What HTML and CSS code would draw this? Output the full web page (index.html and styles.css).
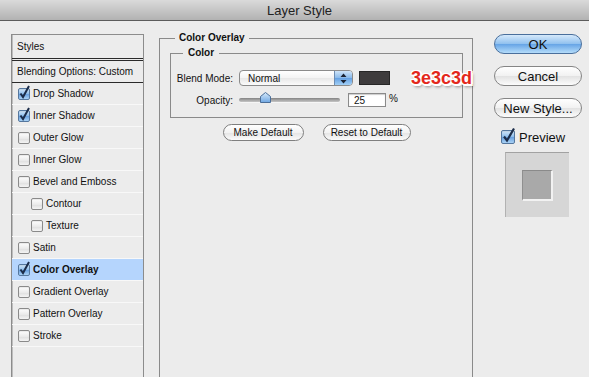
FILE: index.html
```html
<!DOCTYPE html>
<html>
<head>
    <title>Layer Style</title>
    <link rel="stylesheet" href="styles.css">
</head>
<body>
    <div class="titlebar">Layer Style</div>
    <div class="content">
        <div class="styles-list">
            <div class="list-head">Styles</div>
            <div class="list-blend">Blending Options: Custom</div>
            <div class="item"><span class="check on"><svg width="13" height="14" viewBox="0 0 13 14"><path d="M2.5 8.5 L5 12 L11 1" fill="none" stroke="#1c2d4a" stroke-width="2"/></svg></span>Drop Shadow</div>
            <div class="item"><span class="check on"><svg width="13" height="14" viewBox="0 0 13 14"><path d="M2.5 8.5 L5 12 L11 1" fill="none" stroke="#1c2d4a" stroke-width="2"/></svg></span>Inner Shadow</div>
            <div class="item"><span class="check"></span>Outer Glow</div>
            <div class="item"><span class="check"></span>Inner Glow</div>
            <div class="item"><span class="check"></span>Bevel and Emboss</div>
            <div class="item sub"><span class="check"></span>Contour</div>
            <div class="item sub"><span class="check"></span>Texture</div>
            <div class="item"><span class="check"></span>Satin</div>
            <div class="item selected"><span class="check on"><svg width="13" height="14" viewBox="0 0 13 14"><path d="M2.5 8.5 L5 12 L11 1" fill="none" stroke="#1c2d4a" stroke-width="2"/></svg></span>Color Overlay</div>
            <div class="item"><span class="check"></span>Gradient Overlay</div>
            <div class="item"><span class="check"></span>Pattern Overlay</div>
            <div class="item"><span class="check"></span>Stroke</div>
        </div>

        <fieldset class="group">
            <legend>Color Overlay</legend>
            <fieldset class="subgroup">
                <legend>Color</legend>
                <div class="form-grid">
                    <label>Blend Mode:</label>
                    <div class="row">
                        <div class="select">
                            <span>Normal</span>
                            <span class="stepper"><svg width="7" height="11" viewBox="0 0 7 11"><path d="M3.5 0.5 L6.5 4 L0.5 4 Z M0.5 7 L6.5 7 L3.5 10.5 Z" fill="#1b2333"/></svg></span>
                        </div>
                        <span class="swatch"></span>
                        <span class="hex">3e3c3d</span>
                    </div>
                    <label>Opacity:</label>
                    <div class="row">
                        <div class="slider">
                            <span class="thumb"><svg width="11" height="11" viewBox="0 0 11 11"><defs><linearGradient id="tg" x1="0" y1="0" x2="0" y2="1"><stop offset="0" stop-color="#d8ebfb"/><stop offset="1" stop-color="#6ea6e2"/></linearGradient></defs><path d="M5.5 0.5 L10.5 4.5 L10.5 10.5 L0.5 10.5 L0.5 4.5 Z" fill="url(#tg)" stroke="#4c6f99"/></svg></span>
                        </div>
                        <span class="field">25</span>
                        <span class="unit">%</span>
                    </div>
                </div>
            </fieldset>
            <div class="defaults">
                <button class="pill make">Make Default</button>
                <button class="pill reset">Reset to Default</button>
            </div>
        </fieldset>

        <div class="side">
            <button class="side-btn ok">OK</button>
            <button class="side-btn">Cancel</button>
            <button class="side-btn">New Style...</button>
            <div class="preview-toggle"><span class="check on big"><svg width="15" height="16" viewBox="0 0 15 16"><path d="M3 9.5 L6 13.5 L13 1.5" fill="none" stroke="#1c2d4a" stroke-width="2.2"/></svg></span>Preview</div>
            <div class="preview-box"><div class="preview-swatch"></div></div>
        </div>
    </div>
</body>
</html>
```

FILE: styles.css
```css
body {
    margin: 0;
    height: 377px;
    overflow: hidden;
    background: #ececec;
    font-family: "Liberation Sans", Arial, sans-serif;
    font-size: 10px;
    color: #111;
}

.titlebar {
    height: 20px;
    padding-left: 10px;
    border-bottom: 1px solid #5c5c5c;
    background: linear-gradient(#dadada, #b2b2b2);
    text-align: center;
    font-size: 13px;
    line-height: 21px;
    color: #222;
}

.content {
    display: flex;
    align-items: flex-start;
    padding-top: 11px;
}

/* left style list */
.styles-list {
    flex: none;
    margin: 2px 0 0 11px;
    width: 131px;
    height: 360px;
    border: 1px solid #8c8c8c;
    box-shadow: inset 1px 0 0 #bdbdbd;
    background: #ececec;
}

.list-head {
    height: 23px;
    line-height: 23px;
    padding-left: 5px;
    border-bottom: 3px double #2a2a2a;
}

.list-blend {
    height: 21px;
    line-height: 21px;
    padding-left: 5px;
    border-bottom: 1px solid #2a2a2a;
}

.item {
    height: 21px;
    display: flex;
    align-items: center;
    padding-left: 6px;
    border-bottom: 1px solid #f8f8f8;
}

.item.sub {
    padding-left: 19px;
}

.item.selected {
    background: #b5d5fd;
    font-weight: bold;
}

.check {
    position: relative;
    flex: none;
    width: 10px;
    height: 10px;
    margin-right: 3px;
    border: 1px solid #8a8a8a;
    border-radius: 2px;
    background: linear-gradient(#ffffff, #eaeaea 55%, #dedede 56%, #f4f4f4);
    box-shadow: inset 0 1px 1px rgba(0, 0, 0, 0.08);
}

.check.on {
    border-color: #55779e;
    background: linear-gradient(#d3e7f9, #8bbcec 50%, #679fe0 51%, #a9d2f5);
}

.check svg {
    position: absolute;
    left: -1px;
    top: -4px;
}

.check.big {
    width: 12px;
    height: 12px;
}

/* middle settings */
.group {
    flex: none;
    box-sizing: border-box;
    width: 314px;
    min-width: 0;
    height: 350px;
    margin: 0 0 0 15px;
    padding: 3px 9px 0 10px;
    border: 1px solid #8a8a8a;
}

.group > legend {
    margin-left: 5px;
    padding: 0 4px;
    font-weight: bold;
    line-height: 12px;
}

.subgroup {
    min-width: 0;
    margin: 0;
    padding: 0 0 10px 0;
    border: 1px solid #8a8a8a;
}

.subgroup > legend {
    margin-left: 12px;
    padding: 0 5px;
    font-weight: bold;
    line-height: 12px;
}

.form-grid {
    display: grid;
    grid-template-columns: 62px 0;
    grid-template-rows: 16px 14px;
    column-gap: 6px;
    row-gap: 7px;
    padding-top: 11px;
    align-items: center;
}

.form-grid label {
    text-align: right;
}

.row {
    display: flex;
    align-items: center;
    height: 100%;
    white-space: nowrap;
}

.select {
    flex: none;
    box-sizing: border-box;
    width: 114px;
    height: 16px;
    display: flex;
    align-items: center;
    justify-content: space-between;
    padding-left: 8px;
    overflow: hidden;
    border: 1px solid #8b8b8b;
    border-radius: 4px;
    background: linear-gradient(#ffffff, #f3f3f3 50%, #e7e7e7 51%, #fbfbfb);
}

.stepper {
    width: 17px;
    align-self: stretch;
    display: flex;
    align-items: center;
    justify-content: center;
    border-left: 1px solid #6d8cb1;
    background: linear-gradient(#cfe4f8, #88b9ea 50%, #639fe2 51%, #a2d0f6);
}

.swatch {
    flex: none;
    box-sizing: border-box;
    width: 31px;
    height: 14px;
    margin-left: 6px;
    background: #3e3c3d;
    border: 1px solid #262626;
}

.hex {
    flex: none;
    margin-left: 21px;
    font-size: 18px;
    font-weight: bold;
    line-height: 16px;
    color: #e3281c;
    text-shadow: -1px 0 #fff, 1px 0 #fff, 0 -1px #fff, 0 1px #fff,
        -1px -1px #fff, 1px -1px #fff, -1px 1px #fff, 1px 1px #fff,
        2px 0 #fff, 0 2px #fff, 2px 2px #fff,
        2px 3px 3px rgba(0, 0, 0, 0.45);
}

.slider {
    flex: none;
    position: relative;
    width: 101px;
    height: 4px;
    border-radius: 2px;
    background: linear-gradient(#838383, #c6c6c6);
    box-shadow: 0 1px 0 #f6f6f6;
}

.thumb {
    position: absolute;
    left: 21px;
    top: -6px;
    line-height: 0;
}

.field {
    flex: none;
    box-sizing: border-box;
    width: 38px;
    height: 14px;
    margin-left: 8px;
    padding-left: 5px;
    line-height: 13px;
    border: 1px solid #8a8a8a;
    background: #fff;
    box-shadow: inset 0 1px 1px rgba(0, 0, 0, 0.2);
}

.unit {
    margin-left: 3px;
    margin-top: -3px;
}

.defaults {
    display: flex;
    justify-content: center;
    gap: 19px;
    margin-top: 6px;
}

.pill {
    height: 17px;
    padding: 0;
    border: 1px solid #7f7f7f;
    border-radius: 9px;
    background: linear-gradient(#ffffff, #f2f2f2 50%, #e4e4e4 51%, #fbfbfb);
    font-family: "Liberation Sans", Arial, sans-serif;
    font-size: 10px;
    color: #111;
}

.pill.make {
    width: 81px;
}

.pill.reset {
    width: 88px;
}

/* right column */
.side {
    flex: none;
    display: flex;
    flex-direction: column;
    width: 88px;
    margin: 2px 0 0 21px;
}

.side-btn {
    height: 20px;
    margin-bottom: 12px;
    padding: 0;
    border: 1px solid #858585;
    border-radius: 10px;
    background: linear-gradient(#ffffff, #f1f1f1 50%, #e2e2e2 51%, #fcfcfc);
    font-family: "Liberation Sans", Arial, sans-serif;
    font-size: 13px;
    color: #111;
}

.side-btn.ok {
    border-color: #4a6f9c;
    background: linear-gradient(#d6e9fb, #8fc0ee 50%, #66a4e6 51%, #b4dcfa);
}

.preview-toggle {
    display: flex;
    align-items: center;
    height: 18px;
    margin-top: -2px;
    padding-left: 7px;
    font-size: 13px;
}

.preview-toggle .check {
    margin-right: 4px;
}

.preview-box {
    box-sizing: border-box;
    width: 64px;
    height: 65px;
    margin: 6px 0 0 11px;
    display: flex;
    align-items: center;
    justify-content: center;
    background: #d6d6d6;
    border-top: 1px solid #a2a2a2;
    border-left: 1px solid #b2b2b2;
}

.preview-swatch {
    box-sizing: border-box;
    width: 31px;
    height: 31px;
    background: #a9a9a9;
    border-top: 1px solid #8a8a8a;
    border-left: 1px solid #8f8f8f;
    border-right: 2px solid #f2f2f2;
    border-bottom: 2px solid #f2f2f2;
}
```
